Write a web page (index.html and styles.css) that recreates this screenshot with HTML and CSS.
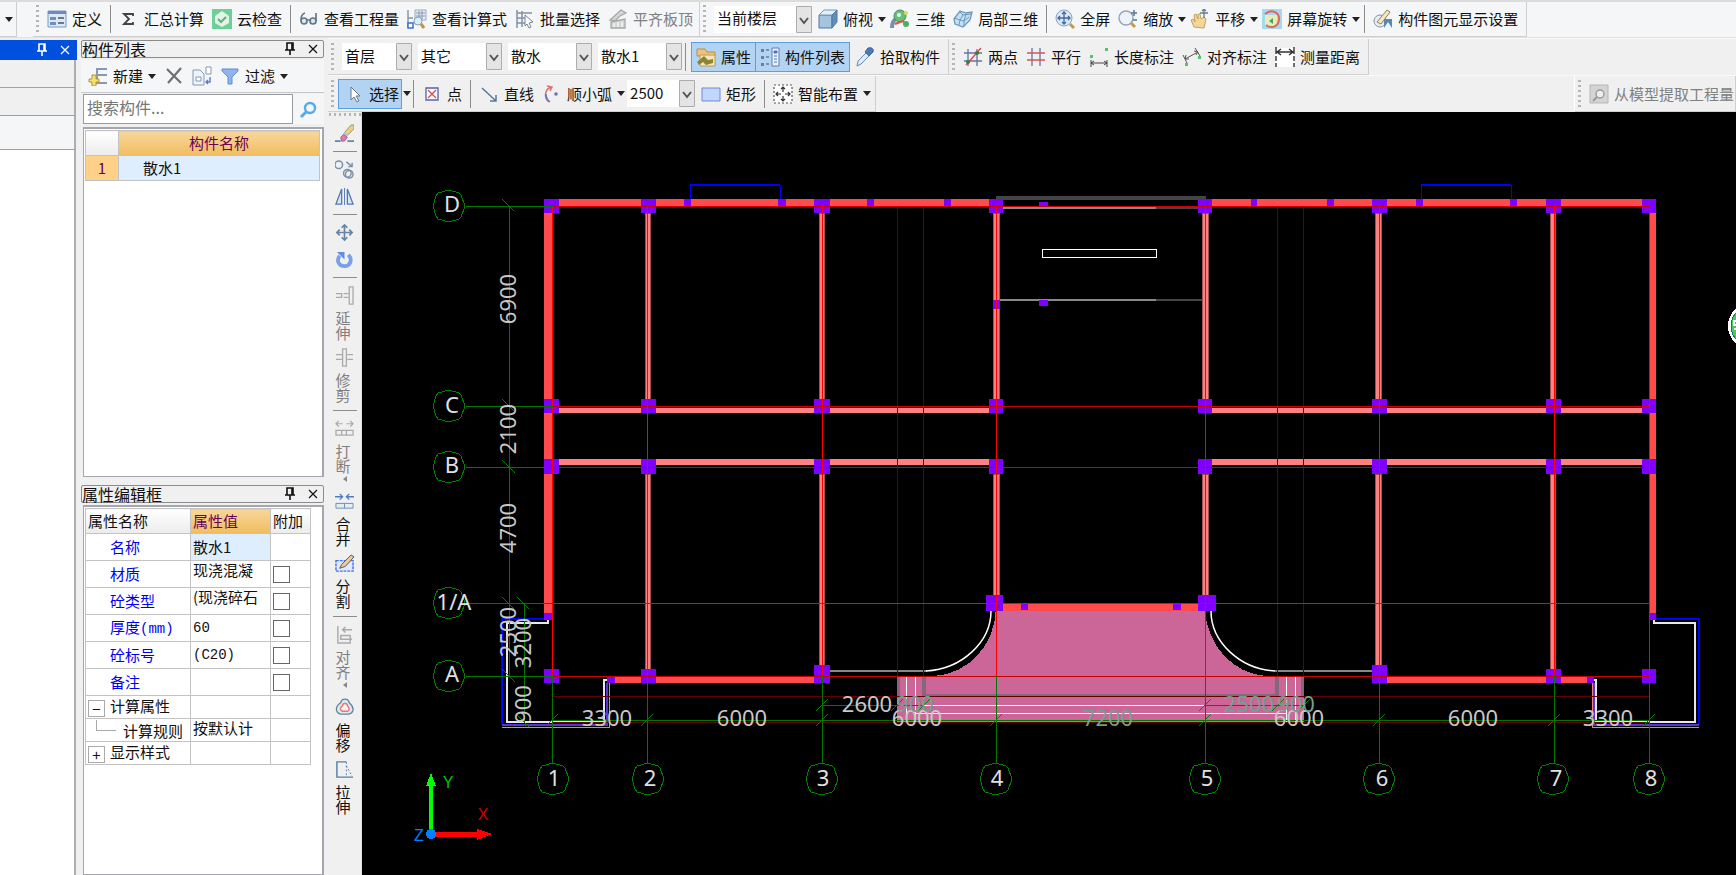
FILE: index.html
```
<!DOCTYPE html>
<html lang="zh-CN">
<head>
    <title>构件列表</title>
    <meta charset="utf-8">
    <meta name="viewport" content="width=device-width, initial-scale=1">
    <link rel="stylesheet" href="styles.css">
</head>
<body>
    <svg class="defs">
        <symbol id="pin" viewBox="0 0 12 14"><path d="M3 1h6v7H3z M1 8h10 M6 8v5 M8 1v7" fill="none" stroke="currentColor" stroke-width="1.6"/></symbol>
        <symbol id="close" viewBox="0 0 12 12"><path d="M2 2l8 8M10 2l-8 8" fill="none" stroke="currentColor" stroke-width="1.2"/></symbol>
        <symbol id="bubble" viewBox="-17 -17 34 34"><path d="M0-16L10-13L12-11L16 0L12 11L10 13L0 16L-11 13L-13 10L-16 0L-13-10L-11-13z"/></symbol>
    </svg>

    <header class="topbar">
        <div class="bar bar-stub"><span class="caret"></span></div>
        <div class="bar bar-main">
            <span class="grip"></span>
            <button class="tool"><svg viewBox="0 0 20 20"><path d="M1 2h18v16H1z" fill="#dce8f6" stroke="#7d98bd"/><path d="M1 2h18v3H1z" fill="#6d8cba"/><path d="M3 8h6v3H3zM3 13h6v3H3z" fill="#6f8fc0"/><path d="M11 9h6M11 14h6" stroke="#456" stroke-width="1.4"/></svg>定义</button>
            <span class="sep"></span>
            <button class="tool"><svg viewBox="0 0 20 20"><path d="M14 7V5H5l5 5-5 5h9v-2" fill="none" stroke="#444" stroke-width="1.8"/></svg>汇总计算</button>
            <button class="tool"><svg viewBox="0 0 20 20"><path d="M0 0h20v20H0z" fill="#6fd096"/><path d="M10 2l7 5v7l-7 4-7-4V7z" fill="#e4f3e8"/><path d="M6 10l3 3 5-5" fill="none" stroke="#62b080" stroke-width="2"/></svg>云检查</button>
            <span class="sep"></span>
            <button class="tool"><svg viewBox="0 0 20 20"><g fill="#dbe8f2" stroke="#667788" stroke-width="1.7"><circle cx="5" cy="12" r="3"/><circle cx="14" cy="12" r="3"/><path d="M2 11c0-4 1-6 4-7M17 12V4M8 11h3" fill="none"/></g></svg>查看工程量</button>
            <button class="tool"><svg viewBox="0 0 20 20"><path d="M1 1v17h5M1 9h5" fill="none" stroke="#8492a5" stroke-width="1.4"/><path d="M8 1h11v10H8z" fill="#e6eaf2" stroke="#9ba9bd"/><path d="M9 4h9M9 7h9M12 2v8M15 2v8" stroke="#8798b0"/><circle cx="11" cy="12" r="4" fill="#d6edfa" stroke="#869db8"/><path d="M14 15l3 4" stroke="#c99043" stroke-width="3"/><path d="M1 14h5v5H1z" fill="#fff" stroke="#3972d0" stroke-width="1.5"/></svg>查看计算式</button>
            <button class="tool"><svg viewBox="0 0 20 20"><path d="M2 1v18M2 4h15M2 9h8M2 14h8M7 2v16" fill="none" stroke="#8492a5" stroke-width="1.5"/><path d="M10 6l8 7-4 1 2 4-2 1-2-4-2 2z" fill="#fff" stroke="#778596"/></svg>批量选择</button>
            <button class="tool" disabled><svg viewBox="0 0 20 20"><path d="M2 11L13 1l5 3-6 3-5 5zM3 19v-6l14-3v9z" fill="#d4d4d4" stroke="#a8a8a8" stroke-width="1.3"/><path d="M6 18v-4M10 18v-5M14 18v-5" stroke="#f4f4f4" stroke-width="1.5"/></svg>平齐板顶</button>
        </div>
        <div class="bar">
            <span class="grip"></span>
            <select class="pick pick-view" aria-label="显示楼层"><option>当前楼层</option></select>
            <button class="tool tool-drop"><svg viewBox="0 0 20 20"><path d="M1 6h13v13H1z" fill="#a5c5de" stroke="#557799"/><path d="M1 6l5-5h13l-5 5z" fill="#e2f1fb" stroke="#7799b5"/><path d="M14 6l5-5v12l-5 6z" fill="#5f8fba" stroke="#557799"/></svg>俯视<span class="caret"></span></button>
            <button class="tool"><svg viewBox="0 0 20 20"><path d="M2 19c0-5 1-8 5-10" fill="none" stroke="#7a91a8" stroke-width="4"/><circle cx="10" cy="7" r="6" fill="#63c276" stroke="#3f8b65"/><circle cx="9" cy="6" r="2" fill="#e8fff0"/><path d="M5 15l8-3 4 5" fill="none" stroke="#da5550" stroke-width="2"/><circle cx="16" cy="15" r="3" fill="#4bb060"/><circle cx="16" cy="4" r="2" fill="#e8d45a"/></svg>三维</button>
            <button class="tool"><svg viewBox="0 0 20 20"><path d="M1 10l6-8 6 2 6-1-2 8-7 7-8-3z" fill="#c5e0f2" stroke="#6c98bb" stroke-width="1.3"/><path d="M7 3l3 3-3 5-6-2M10 6l8-1M7 11l4 1 5-4M7 11l-1 5M11 12v5M13 5l-2 7" fill="none" stroke="#6c98bb"/></svg>局部三维</button>
            <span class="sep"></span>
            <button class="tool"><svg viewBox="0 0 20 20"><path d="M15 15l4 4" stroke="#c99a4b" stroke-width="3"/><circle cx="9" cy="9" r="8" fill="#d8e8fa" stroke="#8da3bd"/><path d="M9 3v12M3 9h12M7 5l2-2 2 2M7 13l2 2 2-2M5 7L3 9l2 2M13 7l2 2-2 2" fill="none" stroke="#4669a0" stroke-width="1.3"/></svg>全屏</button>
            <button class="tool tool-drop"><svg viewBox="0 0 20 20"><circle cx="8" cy="9" r="7" fill="#edf3f8" stroke="#94a4b5" stroke-width="1.4"/><path d="M13 14l4 4" stroke="#c99a4b" stroke-width="3"/><path d="M16 1v6M13 4h6M15 11h4" stroke="#57779d" stroke-width="1.5"/></svg>缩放<span class="caret"></span></button>
            <button class="tool tool-drop"><svg viewBox="0 0 20 20"><path d="M4 18L1 11l2-1 2 3-1-7 2-1 2 5V5h2l1 5 3-2 2 2-2 9z" fill="#f3d79a" stroke="#c3a25f"/><path d="M14 0v9M10 4h8M12 2l2-2 2 2" fill="none" stroke="#667b92" stroke-width="1.3"/></svg>平移<span class="caret"></span></button>
            <button class="tool tool-drop"><svg viewBox="0 0 20 20"><path d="M0 0h20v20H0z" fill="#a5d9ee"/><path d="M3 6h12v11H3z" fill="#e6edb9"/><path d="M3 5c7-6 15-1 14 6s-8 9-13 5" fill="none" stroke="#e06666" stroke-width="2"/><path d="M7 12l4-3v6z" fill="#58a15f"/></svg>屏幕旋转<span class="caret"></span></button>
            <span class="sep"></span>
            <button class="tool"><svg viewBox="0 0 20 20"><circle cx="7" cy="12" r="6" fill="#e5eef5" stroke="#8794a5"/><path d="M4 13L14 1l3 2L8 15z" fill="#f6e5bd" stroke="#8e8066"/><path d="M11 19V10h8v9z" fill="#5b87b6"/><path d="M11 19l4-6 4 6z" fill="#eef4fb"/></svg>构件图元显示设置</button>
        </div>
    </header>

    <div class="work">
        <aside class="dock">
            <div class="dock-title"><svg><use href="#pin"/></svg><svg><use href="#close"/></svg></div>
            <div class="dock-row"></div>
            <div class="dock-row"></div>
            <div class="dock-row dock-row-last"></div>
            <div class="dock-body"></div>
        </aside>

        <aside class="panels">
            <section class="list-panel">
                <h2 class="panel-title"><span>构件列表</span><svg><use href="#pin"/></svg><svg><use href="#close"/></svg></h2>
                <div class="panel-tools">
                    <button class="tool tool-drop"><svg viewBox="0 0 20 20"><path d="M19 3H9v14h10M9 9h10" fill="none" stroke="#8999ad" stroke-width="2"/><path d="M4 9h4v4h3v3H8v4H4v-4H1v-3h3z" fill="#f7df69" stroke="#b39837"/></svg>新建<span class="caret"></span></button>
                    <button class="tool" aria-label="删除"><svg viewBox="0 0 20 20"><path d="M3 3l14 14M17 2L4 17" stroke="#707070" stroke-width="2.2"/></svg></button>
                    <button class="tool" aria-label="复制"><svg viewBox="0 0 20 20"><path d="M1 4h7l4 4v11H1z" fill="#eef3f8" stroke="#8398b5"/><path d="M4 11h5v4H4z" fill="#fff" stroke="#8398b5"/><path d="M14 1h5v7h-5z" fill="#fff" stroke="#8398b5"/><path d="M18 11v5h-4M16 14l-2 2 2 2" fill="none" stroke="#5a79d0" stroke-width="1.4"/></svg></button>
                    <button class="tool tool-drop"><svg viewBox="0 0 20 20"><path d="M2 3h16v2l-6 6v7H8v-7L2 5z" fill="#8fb4ee" stroke="#648dcc"/></svg>过滤<span class="caret"></span></button>
                </div>
                <form class="search">
                    <input type="text" placeholder="搜索构件..." aria-label="搜索构件">
                    <button type="button" aria-label="搜索"><svg viewBox="0 0 20 20"><circle cx="11" cy="8" r="5" fill="#eef8ff" stroke="#58a9e8" stroke-width="2.4"/><path d="M7 12l-5 5" stroke="#58a9e8" stroke-width="3"/></svg></button>
                </form>
                <div class="frame list-frame">
                    <table class="list">
                        <tr><th class="list-no"></th><th class="hot">构件名称</th></tr>
                        <tr><td class="list-mark">1</td><td class="list-name">散水1</td></tr>
                    </table>
                </div>
            </section>
            <section class="prop-panel">
                <h2 class="panel-title"><span>属性编辑框</span><svg><use href="#pin"/></svg><svg><use href="#close"/></svg></h2>
                <div class="frame prop-frame">
                    <table class="props">
                        <tr class="head"><th class="c-name">属性名称</th><th class="c-value hot">属性值</th><th class="c-add">附加</th></tr>
                        <tr><td class="key">名称</td><td class="picked">散水1</td><td></td></tr>
                        <tr><td class="key">材质</td><td>现浇混凝</td><td><input type="checkbox" aria-label="附加材质"></td></tr>
                        <tr><td class="key">砼类型</td><td>(现浇碎石</td><td><input type="checkbox" aria-label="附加砼类型"></td></tr>
                        <tr><td class="key">厚度<span class="mono">(mm)</span></td><td class="mono">60</td><td><input type="checkbox" aria-label="附加厚度"></td></tr>
                        <tr><td class="key">砼标号</td><td class="mono">(C20)</td><td><input type="checkbox" aria-label="附加砼标号"></td></tr>
                        <tr><td class="key">备注</td><td></td><td><input type="checkbox" aria-label="附加备注"></td></tr>
                        <tr class="group"><td><button class="fold">−</button>计算属性</td><td></td><td></td></tr>
                        <tr class="group"><td><span class="branch"></span>计算规则</td><td>按默认计</td><td></td></tr>
                        <tr class="group"><td><button class="fold">+</button>显示样式</td><td></td><td></td></tr>
                    </table>
                </div>
            </section>
        </aside>

        <main class="main">
            <div class="row">
                <div class="bar">
                    <span class="grip"></span>
                    <select class="pick pick-floor" aria-label="楼层"><option>首层</option></select>
                    <select class="pick pick-kind" aria-label="类别"><option>其它</option></select>
                    <select class="pick pick-kind" aria-label="构件类型"><option>散水</option></select>
                    <select class="pick pick-kind" aria-label="构件"><option>散水1</option></select>
                    <span class="sep sep-tight"></span>
                    <div class="toggles">
                        <button class="tool on"><svg viewBox="0 0 20 20"><path d="M1 2h8l2 3h8v4H1z" fill="#efc279" stroke="#b98d4d"/><path d="M4 8h15v11H4z" fill="#f8e7ba" stroke="#bc9851"/><path d="M1 15l7-6 4 4 5-1v4l-7 2-3-3-4 3z" fill="#8d8336"/></svg>属性</button>
                        <button class="tool on"><svg viewBox="0 0 20 20"><path d="M1 2h3v3H1zM1 9h3v3H1zM1 16h3v3H1z" fill="#667f9c"/><path d="M6 3h3M6 10h3M6 17h3" stroke="#667f9c" stroke-width="1.5"/><path d="M12 1h7v18h-7z" fill="#eaf2ff" stroke="#647da4"/><path d="M14 4h3v2h-3zM14 9h3M14 12h3M14 15h3" fill="#3e73dc" stroke="#4c76c2"/></svg>构件列表</button>
                    </div>
                    <button class="tool"><svg viewBox="0 0 20 20"><path d="M2 19l1-5 8-8 3 3-8 8z" fill="#dfedf9" stroke="#6689b0"/><path d="M10 5l3-4c4-1 6 1 5 4l-4 4z" fill="#4a79b5" stroke="#3c669c"/></svg>拾取构件</button>
                </div>
                <div class="bar">
                    <span class="grip"></span>
                    <button class="tool"><svg viewBox="0 0 20 20"><path d="M5 2v17M14 2v17M1 6h18M1 14h18" stroke="#6571a8" stroke-width="1.3"/><path d="M3 18L18 1" stroke="#e04545" stroke-width="1.3"/><circle cx="14" cy="6" r="2" fill="#397e3c"/><circle cx="5" cy="15" r="2" fill="#397e3c"/></svg>两点</button>
                    <button class="tool"><svg viewBox="0 0 20 20"><path d="M6 1v18M14 1v18" stroke="#6571a8" stroke-width="1.3"/><path d="M1 6h18M1 13h18" stroke="#d45555" stroke-width="1.3"/></svg>平行</button>
                    <button class="tool"><svg viewBox="0 0 20 20"><path d="M2 13v7M18 13v7M2 16h16M5 14l-3 2 3 2M15 14l3 2-3 2" fill="none" stroke="#444"/><path d="M1 8h3v3H1zM16 1h3v3h-3z" fill="#50c766"/></svg>长度标注</button>
                    <button class="tool"><svg viewBox="0 0 20 20"><path d="M1 8l4 8M13 1l5 8M3 12L16 5M4 8l-1 4h4M12 4l4 1-2 3" fill="none" stroke="#555"/><path d="M3 16h3v3H3zM16 9h3v3h-3z" fill="#50c766"/></svg>对齐标注</button>
                    <button class="tool"><svg viewBox="0 0 20 20"><path d="M0 1h20v19H0z" fill="#fff"/><path d="M1 0v7M1 9v5M1 16v4M19 0v7M19 9v5M19 16v4M1 5h18M6 2L2 5l4 3M14 2l4 3-4 3" fill="none" stroke="#333" stroke-width="1.4"/></svg>测量距离</button>
                </div>
            </div>
            <div class="row">
                <div class="bar">
                    <span class="grip"></span>
                    <button class="tool on on-alone"><svg viewBox="0 0 20 20"><path d="M7 3v13l3-3 3 5 2-1-3-5h4z" fill="#fff" stroke="#68788e"/></svg>选择</button>
                    <span class="caret caret-near"></span>
                    <span class="sep"></span>
                    <button class="tool"><svg viewBox="0 0 20 20"><path d="M4 4h12v12H4z" fill="#fff" stroke="#555eb2" stroke-width="1.3"/><path d="M6 6l8 8M14 6l-8 8" stroke="#d94848" stroke-width="1.3"/></svg>点</button>
                    <span class="sep"></span>
                    <button class="tool"><svg viewBox="0 0 20 20"><path d="M3 4l14 13M17 11v6h-6" fill="none" stroke="#58789c" stroke-width="1.5"/></svg>直线</button>
                    <button class="tool tool-drop"><svg viewBox="0 0 20 20"><path d="M9 3C2 6 2 14 7 18M5 2l5 1-2 4" fill="none" stroke="#d5736c" stroke-width="1.5"/><path d="M4 10c0 4 1 6 4 8" fill="none" stroke="#5c79bd" stroke-width="1.5"/><circle cx="14" cy="10" r="1.8" fill="#5c79bd"/></svg>顺小弧<span class="caret"></span></button>
                    <select class="pick pick-size" aria-label="半径"><option>2500</option></select>
                    <button class="tool"><svg viewBox="0 0 20 20"><path d="M1 4h18v13H1z" fill="#c2d5fc" stroke="#718bd0"/></svg>矩形</button>
                    <span class="sep"></span>
                    <button class="tool tool-drop"><svg viewBox="0 0 20 20"><path d="M1 1h18v18H1z" fill="#fff" stroke="#555" stroke-dasharray="2 2" stroke-width="1.2"/><path d="M10 3v5M10 12v5M3 10h5M12 10h5M8 5l2-2 2 2M8 15l2 2 2-2M5 8l-2 2 2 2M15 8l2 2-2 2" fill="none" stroke="#333" stroke-width="1.2"/></svg>智能布置<span class="caret"></span></button>
                </div>
                <div class="bar bar-right">
                    <span class="grip"></span>
                    <button class="tool" disabled><svg viewBox="0 0 20 20"><path d="M1 1h18v18H1z" fill="#d4d4d4" stroke="#b6b6b6"/><circle cx="11" cy="10" r="4" fill="#eee" stroke="#999" stroke-width="1.4"/><path d="M8 13l-4 4" stroke="#999" stroke-width="2"/></svg>从模型提取工程量</button>
                </div>
            </div>

            <div class="stage">
                <nav class="edit">
                    <span class="grip-h"></span>
                    <button class="vtool" aria-label="删除"><svg viewBox="0 0 20 20"><path d="M0 18h6M13 18h7" stroke="#6684a5" stroke-width="2"/><path d="M10 9l7-8h3v4l-7 7z" fill="#f1d06d" stroke="#8795a4"/><path d="M9 10l4 3" stroke="#b8c4d0" stroke-width="3"/><path d="M6 14l3-3 4 3-3 4H7z" fill="#e07ab5" stroke="#a65c85"/></svg></button>
                    <span class="rule"></span>
                    <button class="vtool" aria-label="复制"><svg viewBox="0 0 20 20"><g fill="none" stroke="#7890aa" stroke-width="1.5"><circle cx="4" cy="5" r="4"/><circle cx="13" cy="14" r="4"/><circle cx="15" cy="15" r="4"/><path d="M12 2l6 5M18 3v4h-4"/></g></svg></button>
                    <button class="vtool" aria-label="镜像"><svg viewBox="0 0 20 20"><path d="M7 2v16H1zM13 2v16h6z" fill="#dce7f4" stroke="#5379b3" stroke-width="1.4"/><path d="M10 1v18" stroke="#5379b3"/></svg></button>
                    <span class="rule"></span>
                    <button class="vtool" aria-label="移动"><svg viewBox="0 0 20 20"><path d="M10 2v16M2 10h16M7 5l3-3 3 3M7 15l3 3 3-3M5 7l-3 3 3 3M15 7l3 3-3 3" fill="none" stroke="#6684a5" stroke-width="1.8"/></svg></button>
                    <button class="vtool" aria-label="旋转"><svg viewBox="0 0 20 20"><path d="M5 6c-4 5-1 11 5 11s9-7 4-12" fill="none" stroke="#7ba0ea" stroke-width="4"/><path d="M2 2h8v8z" fill="#648ce0"/></svg></button>
                    <span class="rule"></span>
                    <button class="vtool" disabled><svg viewBox="0 0 20 20"><path d="M15 1h4v18h-4zM1 8h6v4H1M9 8h5M9 12h5" fill="none" stroke="#aaa" stroke-width="1.4"/></svg><span>延伸</span></button>
                    <button class="vtool" disabled><svg viewBox="0 0 20 20"><path d="M8 1h4v18H8zM1 7h7M1 12h7M13 7h6M13 12h6" fill="none" stroke="#aaa" stroke-width="1.4"/></svg><span>修剪</span></button>
                    <span class="rule"></span>
                    <button class="vtool" disabled><svg viewBox="0 0 20 20"><path d="M1 5h7M12 5h7M4 2L1 5l3 3M16 2l3 3-3 3M1 12h18v5H1zM7 12v5M12 12v5" fill="none" stroke="#aaa" stroke-width="1.3"/></svg><span>打断</span><i class="more"></i></button>
                    <button class="vtool"><svg viewBox="0 0 20 20"><path d="M0 5h8M12 5h8M5 2l3 3-3 3M15 2l-3 3 3 3" fill="none" stroke="#4c7dc3" stroke-width="1.4"/><path d="M1 12h18v5H1zM10 12v5" fill="#e4edf6" stroke="#6f8cac"/></svg><span>合并</span></button>
                    <button class="vtool"><svg viewBox="0 0 20 20"><path d="M1 7h18v11H1z" fill="#ddebfc" stroke="#4a70e8" stroke-dasharray="3 1" stroke-width="1.5"/><path d="M5 15l2-4L17 1l3 2-9 10z" fill="#efc998" stroke="#555"/></svg><span>分割</span></button>
                    <span class="rule"></span>
                    <button class="vtool" disabled><svg viewBox="0 0 20 20"><path d="M3 1v18h13v-8H6v4h12M8 5h10M11 2L8 5l3 3" fill="none" stroke="#aaa" stroke-width="1.5"/></svg><span>对齐</span><i class="more"></i></button>
                    <button class="vtool"><svg viewBox="0 0 20 20"><path d="M6 5c1-5 8-5 9 0 6 5 5 11-1 12H6C0 15 0 9 6 5z" fill="#d9e9f2" stroke="#66859d" stroke-width="1.4"/><path d="M8 8c0-3 5-3 5 0 3 3 2 6 0 6H8c-3-1-3-4 0-6z" fill="#fff0ed" stroke="#e17a73" stroke-width="1.5"/></svg><span>偏移</span></button>
                    <button class="vtool"><svg viewBox="0 0 20 20"><path d="M12 2H2v16h17" fill="none" stroke="#587da6" stroke-width="1.5"/><path d="M12 2v16M12 6l6 11" fill="none" stroke="#587da6" stroke-dasharray="2 2"/></svg><span>拉伸</span></button>
                </nav>

                <div class="canvas">
                    <svg class="plan" viewBox="362 112 1374 763" preserveAspectRatio="xMinYMin meet">
                        <!-- steps and porch -->
                        <path class="porch" d="M996 608H1205C1206 646 1234 674 1266 676H1304V723H897V676H934C968 674 995 646 996 608z"/>
                        <path class="step-edge" d="M897 676h3v22h-3zM922 676h4v20h-4zM1275 676h4v20h-4zM1301 676h3v22h-3zM922 694h357v3h-357z"/>
                        <path class="white" d="M906 676v46M915 676v46M1286 676v46M1295 676v46M923 705h282M915 713h371"/>

                        <!-- bays left and right -->
                        <path class="blue" d="M544 619H502V725"/>
                        <path class="blue" d="M1656 619H1699V725"/>
                        <path class="pinkline" d="M502 727H609V683M1699 727H1592V683"/>
                        <path class="violet" d="M502 725H607V683M1699 725H1594V683"/>
                        <path class="white bay" d="M548 620V623H507V722H604V680H607M1654 620V623H1695V722H1596V680H1593"/>
                        <path class="blue-thin" d="M690 199V185M780 199V185M1421 199V185M1511 199V185"/>
                        <path class="blue" d="M690 185H780M1421 185H1511"/>

                        <!-- stair hall -->
                        <path class="g4" d="M996 196h210v4H996zM1156 207h42v2h-42zM1156 299h46v2h-46z"/>
                        <path class="g8" d="M1003 207h153v2h-153zM1000 299h156v2h-156zM830 670h97v2h-97zM1275 670h97v2h-97z"/>
                        <path class="white" d="M1042 249h114v8h-114z"/>
                        <path class="arc" d="M926 671C962 669 991 642 991 611M1275 671C1240 669 1211 642 1211 611"/>

                        <!-- walls -->
                        <path class="wall" d="M544 199h445v7H544zM1212 199h444v7h-444zM544 199h9v415h-9zM1649 199h7v415h-7zM607 676h207v7H607zM1387 676h200v7h-200zM1003 603h195v8h-195z"/>
                        <path class="inner" d="M559 408h430v5H559zM1212 408h430v5h-430zM559 459h430v6H559zM1212 459h430v6h-430z"/>
                        <path class="inner edge" d="M645 213h5v186h-5zM819 213h5v186h-5zM993 213h6v186h-6zM1202 213h6v186h-6zM1375 213h6v186h-6zM1550 213h5v186h-5zM645 474h5v195h-5zM819 474h5v191h-5zM993 474h6v121h-6zM1202 474h6v121h-6zM1375 474h6v191h-6zM1550 474h5v195h-5z"/>

                        <!-- columns -->
                        <path class="col" d="M544 199h15v14h-15zM641 199h15v14h-15zM814 199h16v14h-16zM989 199h14v14h-14zM1198 199h14v14h-14zM1372 199h15v14h-15zM1546 199h15v14h-15zM1642 199h14v14h-14z"/>
                        <path class="col" d="M544 399h15v14h-15zM641 399h15v14h-15zM814 399h16v14h-16zM989 399h14v14h-14zM1198 399h14v14h-14zM1372 399h15v14h-15zM1546 399h15v14h-15zM1642 399h14v14h-14z"/>
                        <path class="col" d="M544 459h15v15h-15zM641 459h15v15h-15zM814 459h16v15h-16zM989 459h14v15h-14zM1198 459h14v15h-14zM1372 459h15v15h-15zM1546 459h15v15h-15zM1642 459h14v15h-14z"/>
                        <path class="col" d="M544 669h15v14h-15zM641 669h15v14h-15zM814 665h16v18h-16zM986 595h17v16h-17zM1198 595h18v16h-18zM1372 665h15v18h-15zM1546 669h15v14h-15zM1642 669h14v14h-14z"/>
                        <path class="col" d="M684 199h7v7h-7zM778 199h8v7h-8zM867 199h7v7h-7zM944 199h7v7h-7zM1251 199h6v7h-6zM1327 199h7v7h-7zM1416 199h7v7h-7zM1510 199h7v7h-7zM544 613h9v7h-9zM1649 613h7v7h-7zM607 676h8v7h-8zM1587 676h7v7h-7zM1039 202h9v4h-9zM1039 300h9v6h-9zM993 300h7v9h-7zM1021 604h7v6h-7zM1173 604h8v6h-8z"/>

                        <!-- grid -->
                        <path class="dark" d="M897 207V676M923 207V676M1277 207V676M1303 207V676M553 696H1649M553 722H1649"/>
                        <path class="mid" d="M553 206H1649M553 406H1649M553 467H1649M553 676H1649"/>
                        <path class="red" d="M552 206V676M647 206V676M822 206V676M996 206V676M1205 206V676M1379 206V676M1554 206V676M1649 206V676M553 603H1649"/>
                        <path class="green" d="M466 206H553M466 406H553M466 467H553M466 603H553M466 676H553M509 206V676M524 603V722M552 676V763M647 676V763M822 676V763M996 676V763M1205 676V763M1379 676V763M1554 676V763M1649 676V763M553 720H1649M822 705H923M1205 705H1304"/>
                        <path class="tick" d="M502 199l12 12M502 399l12 12M502 460l13 13M502 597l12 12M517 597l12 12M502 669l13 13M517 715l12 12"/>
                        <path class="tick" d="M546 726l12-12M641 726l12-12M816 726l12-12M990 726l12-12M1199 726l12-12M1373 726l12-12M1548 726l12-12M1643 726l12-12M816 711l12-12M891 711l12-12M918 711l12-12M1199 711l12-12M1272 711l12-12M1298 711l12-12"/>
                        <g class="bubble">
                            <use href="#bubble" x="432" y="189" width="34" height="34"/><use href="#bubble" x="432" y="389" width="34" height="34"/><use href="#bubble" x="432" y="450" width="34" height="34"/><use href="#bubble" x="432" y="586" width="34" height="34"/><use href="#bubble" x="432" y="659" width="34" height="34"/>
                            <use href="#bubble" x="536" y="762" width="34" height="34"/><use href="#bubble" x="631" y="762" width="34" height="34"/><use href="#bubble" x="805" y="762" width="34" height="34"/><use href="#bubble" x="979" y="762" width="34" height="34"/><use href="#bubble" x="1188" y="762" width="34" height="34"/><use href="#bubble" x="1362" y="762" width="34" height="34"/><use href="#bubble" x="1536" y="762" width="34" height="34"/><use href="#bubble" x="1632" y="762" width="34" height="34"/>
                        </g>
                        <g class="label">
                            <text x="452" y="212">D</text><text x="452" y="413">C</text><text x="452" y="473">B</text><text x="454" y="610">1/A</text><text x="452" y="682">A</text>
                            <text x="554" y="786">1</text><text x="650" y="786">2</text><text x="823" y="786">3</text><text x="997" y="786">4</text><text x="1207" y="786">5</text><text x="1382" y="786">6</text><text x="1556" y="786">7</text><text x="1651" y="786">8</text>
                        </g>
                        <g class="dim">
                            <text x="607" y="726">3300</text><text x="742" y="726">6000</text><text x="917" y="726">6000</text><text class="over" x="1108" y="726">7200</text><text x="1299" y="726">6000</text><text x="1473" y="726">6000</text><text x="1608" y="726">3300</text>
                            <text x="867" y="712">2600</text><text class="over" x="915" y="712">900</text><text class="over" x="1249" y="712">2500</text><text class="over" x="1296" y="712">900</text>
                            <text transform="translate(516 299) rotate(-90)">6900</text><text transform="translate(516 429) rotate(-90)">2100</text><text transform="translate(516 528) rotate(-90)">4700</text><text transform="translate(516 632) rotate(-90)">2500</text><text transform="translate(531 643) rotate(-90)">3200</text><text transform="translate(531 704) rotate(-90)">900</text>
                        </g>

                        <!-- axes -->
                        <path d="M429 830V786H426L431 773L436 786H433V830z" fill="#0f0"/>
                        <path d="M435 832H477V829L492 834L477 840V837H435z" fill="#f00"/>
                        <circle cx="431" cy="834" r="5" fill="#0080ff"/>
                        <g class="axis"><text class="y" x="448" y="788">Y</text><text class="x" x="483" y="820">X</text><text class="z" x="419" y="841">Z</text></g>

                        <g>
                            <circle cx="1751" cy="326" r="23" fill="#fff"/><circle cx="1751" cy="326" r="20" fill="#4cc861" stroke="#177a62"/>
                            <path d="M1740 321h-6v4h6M1734 329h6" fill="none" stroke="#fff" stroke-width="2"/>
                        </g>
                    </svg>
                </div>
            </div>
        </main>
    </div>
</body>
</html>
```
FILE: styles.css
```
body{
    margin: 0;
    height: 100vh;
    display: flex;
    flex-direction: column;
    overflow: hidden;
    background: #f0f0f0;
    font-family: "Noto Sans CJK SC", sans-serif;
    font-size: 15px;
    line-height: 20px;
    color: #111;
}
button, input, select{
    font: inherit;
    color: inherit;
}
button{
    background: none;
    border: none;
    padding: 0;
    white-space: nowrap;
}
button:disabled{
    color: #808080;
}
.defs{
    position: absolute;
    width: 0;
    height: 0;
}

/* toolbars */
.topbar{
    display: flex;
    flex: none;
    height: 38px;
    box-sizing: border-box;
    border-top: 2px solid #dcdcdc;
    border-bottom: 1px solid #dfe1e3;
    background: #f4f6f8;
}
.bar{
    display: flex;
    align-items: center;
    gap: 8px;
    padding: 0 8px 0 3px;
    box-sizing: border-box;
    border-right: 1px solid #cfcfcf;
    border-bottom: 1px solid #cfcfcf;
    flex: none;
}
.bar-stub{
    width: 17px;
    padding: 0 0 0 5px;
    margin-right: 16px;
}
.bar-main{
    padding-right: 6px;
}
.row{
    display: flex;
    flex: none;
    height: 37px;
    box-sizing: border-box;
    border-top: 1px solid #fafafa;
}
.bar-right{
    margin-left: auto;
    padding-right: 1px;
    border-left: 1px solid #fff;
}
.grip{
    width: 3px;
    height: 28px;
    background: repeating-linear-gradient(#b5b5b5 0 2px, transparent 2px 5px);
}
.grip-h{
    width: 32px;
    height: 3px;
    background: repeating-linear-gradient(90deg, #b5b5b5 0 2px, transparent 2px 5px);
}
.tool{
    display: flex;
    align-items: center;
    gap: 5px;
    height: 28px;
}
.tool svg{
    width: 20px;
    height: 20px;
    flex: none;
}
.tool-drop{
    margin-right: -4px;
}
.caret{
    border: 4px solid transparent;
    border-top: 5px solid #222;
    border-bottom: none;
}
.caret-near{
    margin-left: -7px;
    margin-right: -6px;
}
.sep{
    width: 1px;
    height: 28px;
    background: #8c8c8c;
}
.sep-tight{
    margin: 0 -3px;
}
.toggles{
    display: flex;
    margin-right: -3px;
}
.on{
    height: 30px;
    box-sizing: border-box;
    padding: 0 4px;
    border: 1px solid #5d9ee0;
    background: #b3d3f3;
}
.on + .on{
    border-left: none;
}
.on-alone{
    padding: 0 2px 0 5px;
    margin-left: -4px;
}
.pick{
    appearance: none;
    height: 27px;
    border: none;
    border-radius: 0;
    padding: 0 18px 2px 3px;
    margin-right: -2px;
    background: #fff url("data:image/svg+xml,%3Csvg xmlns='http://www.w3.org/2000/svg' width='16' height='27'%3E%3Cpath d='M.5 .5h15v26H.5z' fill='%23e4e4e4' stroke='%23adadad'/%3E%3Cpath d='M4 12l4 5 4-5' fill='none' stroke='%23555' stroke-width='2'/%3E%3C/svg%3E") right center no-repeat;
}
.pick-view{ width: 98px; }
.pick-floor{ width: 70px; }
.pick-kind{ width: 84px; }
.pick-size{
    width: 68px;
    margin-left: -2px;
}

/* left side */
.work{
    display: flex;
    flex: 1;
    min-height: 0;
}
.dock{
    display: flex;
    flex-direction: column;
    width: 77px;
    flex: none;
    padding-top: 2px;
    margin-right: 5px;
}
.dock-title{
    display: flex;
    justify-content: flex-end;
    align-items: center;
    gap: 11px;
    height: 20px;
    padding-right: 6px;
    background: #0050e0;
    color: #fff;
}
.dock-title svg, .panel-title svg{
    width: 12px;
    height: 14px;
}
.dock-row{
    height: 27px;
    margin-right: 1px;
    border-right: 2px solid #aeaeb2;
    border-bottom: 1px solid #a0a0a0;
}
.dock-row-last{
    height: 33px;
    background: #f5f6f8;
}
.dock-body{
    flex: 1;
    margin-right: 1px;
    background: #fff;
    border-right: 2px solid #aeaeb2;
}
.panels{
    display: flex;
    flex-direction: column;
    width: 243px;
    flex: none;
    padding-top: 2px;
    margin-left: -1px;
    margin-right: 4px;
}
.list-panel{
    display: flex;
    flex-direction: column;
}
.prop-panel{
    display: flex;
    flex-direction: column;
    flex: 1;
    margin-top: 8px;
}
.panel-title{
    display: flex;
    align-items: center;
    gap: 11px;
    height: 16px;
    margin: 0 0 2px;
    padding-right: 4px;
    border: 1px solid #8c8c8c;
    border-radius: 2px;
    font-size: 16px;
    font-weight: normal;
    line-height: 16px;
}
.panel-title span{
    flex: 1;
}
.panel-tools{
    display: flex;
    align-items: center;
    gap: 8px;
    height: 32px;
    padding-left: 7px;
    background: #f5f6f8;
    border-bottom: 1px solid #c8c8c8;
}
.panel-tools .tool-drop{
    margin-right: 0;
}
.search{
    display: flex;
    margin: 1px 0 3px 2px;
}
.search input{
    width: 210px;
    height: 30px;
    box-sizing: border-box;
    border: 1px solid #9a9aa2;
    padding: 0 3px 4px;
    background: #fff;
    font-size: 16px;
}
.search input::placeholder{
    color: #777;
}
.search button{
    flex: 1;
    background: #f5f6f8;
}
.search button svg{
    width: 20px;
    height: 20px;
    vertical-align: middle;
}
.frame{
    margin-left: 2px;
    border: 2px solid #a6a6ae;
    border-bottom-width: 1px;
    border-left-width: 1px;
    background: #fff;
    padding: 1px;
}
.list-frame{
    height: 345px;
}
.prop-frame{
    flex: 1;
}
table{
    border-collapse: collapse;
    table-layout: fixed;
    line-height: 18px;
}
th{
    font-weight: normal;
    background: linear-gradient(#fff, #ececec);
}
th, td{
    padding: 0 2px;
    border: 1px solid #c3c3c3;
    box-sizing: border-box;
    white-space: nowrap;
    overflow: hidden;
}
.hot{
    background: linear-gradient(#f8d69a, #f0bd60);
    color: #6b005a;
}
.list{
    width: 235px;
}
.list tr{
    height: 25px;
}
.list .list-no{
    width: 33px;
}
.list .list-mark{
    background: #ffd088;
    color: #6b005a;
    text-align: center;
}
.list .list-name{
    background: #dfeeff;
    padding-left: 24px;
}
.props{
    width: 225px;
}
.props tr{
    height: 27px;
}
.props .head{
    height: 25px;
}
.props .group{
    height: 23px;
}
.props th{
    text-align: left;
}
.c-name{ width: 105px; }
.c-value{ width: 80px; }
.c-add{ width: 40px; }
.props td{
    vertical-align: middle;
}
.props td + td{
    vertical-align: top;
}
.props .key{
    padding-left: 24px;
    color: #0000f0;
}
.props .picked{
    background: #dfeeff;
    vertical-align: middle;
}
.props .mono{
    vertical-align: middle;
}
.mono{
    font-family: "Liberation Mono", "Noto Sans CJK SC", monospace;
    font-size: 14px;
}
.props .key .mono{
    vertical-align: baseline;
}
.props input{
    appearance: none;
    width: 17px;
    height: 17px;
    box-sizing: border-box;
    margin: 5px 0 0;
    border: 1px solid #666;
    background: #fff;
    vertical-align: top;
}
.fold{
    width: 17px;
    height: 17px;
    box-sizing: border-box;
    margin-right: 5px;
    border: 1px solid #aaa;
    background: #fff;
    line-height: 13px;
    vertical-align: middle;
}
.branch{
    display: inline-block;
    width: 20px;
    height: 11px;
    box-sizing: border-box;
    margin: 0 7px 0 8px;
    border-left: 1px solid #aaa;
    border-bottom: 1px solid #aaa;
    vertical-align: 6px;
}

/* drawing area */
.main{
    display: flex;
    flex-direction: column;
    flex: 1;
    min-width: 0;
}
.stage{
    display: flex;
    flex: 1;
    min-height: 0;
}
.edit{
    display: flex;
    flex-direction: column;
    align-items: center;
    gap: 8px;
    width: 34px;
    flex: none;
    box-sizing: border-box;
    padding-top: 1px;
    border-right: 1px solid #ddd;
}
.rule{
    width: 24px;
    height: 1px;
    background: #8c8c8c;
}
.vtool{
    display: flex;
    flex-direction: column;
    align-items: center;
    flex: none;
}
.vtool svg{
    width: 19px;
    height: 19px;
}
.vtool span{
    margin: 5px 3px 0 0;
    width: 15px;
    line-height: 15px;
    white-space: normal;
}
.more{
    margin: 3px 0 2px;
    border: 3px solid transparent;
    border-left: none;
    border-right: 4px solid #888;
}
.canvas{
    flex: 1;
    min-width: 0;
    background: #000;
    overflow: hidden;
}
.plan{
    display: block;
    width: 100%;
    shape-rendering: crispEdges;
}
.plan text{
    font-family: "Noto Sans", sans-serif;
    font-size: 22px;
    text-anchor: middle;
}
.porch{ fill: #cc6699; }
.step-edge{ fill: #86667a; }
.white{ fill: none; stroke: #fff; }
.bay{ stroke: #e8e8e8; stroke-width: 2; }
.arc{ fill: none; stroke: #fff; stroke-width: 1.5; shape-rendering: auto; }
.blue{ fill: none; stroke: #00f; stroke-width: 2; }
.blue-thin{ fill: none; stroke: #00f; }
.violet{ fill: none; stroke: #5a32d8; stroke-width: 2; }
.pinkline{ fill: none; stroke: #f08080; }
.g4{ fill: #444; }
.g8{ fill: #888; }
.wall{ fill: #ff4b4b; }
.inner{ fill: #ff8080; }
.edge{ stroke: #a05050; }
.col{ fill: #8000ff; }
.dark{ stroke: #640000; }
.mid{ stroke: #c80000; }
.red{ stroke: #f00; }
.green{ fill: none; stroke: #007800; }
.tick{ stroke: #008000; }
.bubble{ fill: none; stroke: #008000; }
.label{ fill: #e0e0e0; }
.dim{ fill: #c8c8c8; }
.dim .over{ fill: #6fa28e; }
.plan .axis text{
    font-family: "Liberation Sans", sans-serif;
    font-size: 16px;
}
.axis .x{ fill: #d00000; }
.axis .y{ fill: #00c800; }
.axis .z{ fill: #0080ff; }
```
